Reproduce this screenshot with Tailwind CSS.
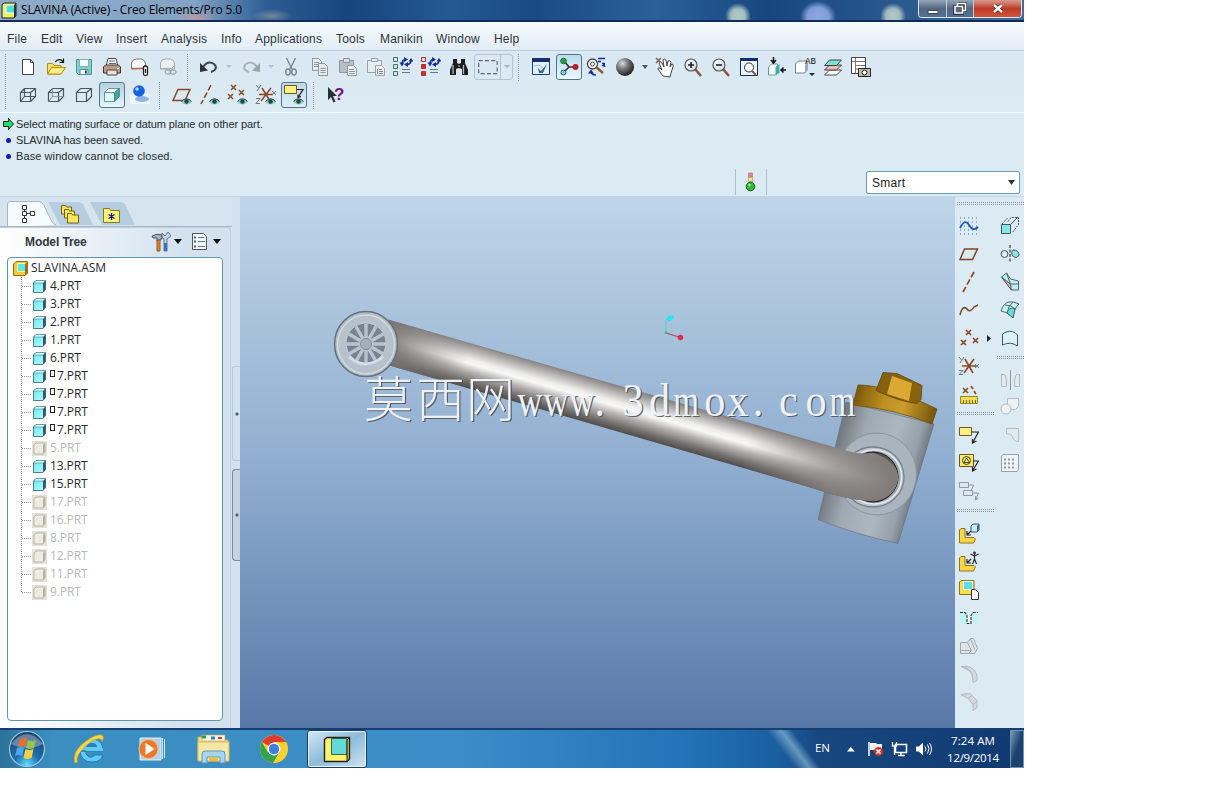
<!DOCTYPE html>
<html lang="en">
<head>
<meta charset="utf-8">
<title>SLAVINA (Active) - Creo Elements/Pro 5.0</title>
<script src="https://cdn.jsdelivr.net/npm/@tailwindcss/browser@4"></script>
</head>
<body class="bg-white overflow-hidden font-['Liberation_Sans',sans-serif]">
<svg width="0" height="0" class="absolute">
  <defs>
    <linearGradient id="cy" x1="0" y1="0" x2="1" y2="1"><stop offset="0" stop-color="#5feaf2"/><stop offset="1" stop-color="#c4fbff"/></linearGradient>
    <linearGradient id="lens" x1="0" y1="0" x2="1" y2="1"><stop offset="0" stop-color="#fff"/><stop offset="1" stop-color="#c5d6e4"/></linearGradient>
    <radialGradient id="ball" cx=".35" cy=".3" r=".8"><stop offset="0" stop-color="#ddd"/><stop offset=".4" stop-color="#777"/><stop offset="1" stop-color="#111"/></radialGradient>
    <symbol id="part" viewBox="0 0 15 15"><path d="M1.500 4 4 1.500h9.500v9L11 13.500H1.500z" fill="url(#cy)" stroke="#4a8288"/><path d="M13.500 1.500v9L11 13.500V4z" fill="#2d5a66"/><path d="M1.500 4 4 1.500h9.500L11 4z" fill="#d9fdff" stroke="#4a8288" stroke-width=".6"/></symbol>
    <symbol id="off" viewBox="0 0 15 15"><path d="M0 0h15v15H0z" fill="#e4e2d6"/><path d="M2 4 4 2h9v8.500L11 13H2z" fill="#eeece0" stroke="#b9b7aa"/><path d="M13 2v8.500L11 13V4z" fill="#b3b1a5"/></symbol>
    <symbol id="eye" viewBox="0 0 11 8"><ellipse cx="5.500" cy="4.500" rx="5" ry="3" fill="#9cc8bd"/><path d="M.5 4.500Q5.500-1 10.500 4.500" fill="none" stroke="#345"/><circle cx="5.500" cy="4.500" r="2.200" fill="#155048"/></symbol>
  </defs>
</svg>
<div class="w-[1024px] h-[768px] flex flex-col overflow-hidden bg-[#dceaf3]">

  <header class="h-[22px] shrink-0 flex justify-between border-b-2 border-[#0f2d58] bg-[radial-gradient(ellipse_20px_8px_at_196px_18px,#c9969dcc_0,transparent),radial-gradient(ellipse_20px_7px_at_272px_16px,#8f98a0bb_0,transparent),radial-gradient(ellipse_13px_13px_at_738px_16px,#b4cbc3_0,#9fbcc0_55%,transparent),radial-gradient(ellipse_18px_16px_at_818px_17px,#8ba7df_0,#7f9ed8_60%,transparent),radial-gradient(ellipse_13px_13px_at_893px_16px,#b4cbc3_0,#9fbcc0_55%,transparent),linear-gradient(90deg,#8fadc9,#84a3c5_19%,#2d5d94_26%,#17447c_34%,#245a94_44%,#194a84_52%,#2a619a_64%,#17467f_75%,#3d6b9c)]">
    <div class="flex items-center pl-px">
      <svg width="17" height="17" viewBox="0 0 17 17"><path d="M1 2.500 3 1h12v13l-2 2H1z" fill="#eef060" stroke="#222"/><path d="M5 3h9v8H5z" fill="#4fe0d8" stroke="#fff"/><path d="M15 1v13l-2 2V3z" fill="#333"/></svg>
      <h1 class="ml-[3px] text-[12px] leading-[20px] whitespace-nowrap text-black tracking-[-0.13px] font-['Open_Sans',sans-serif]">SLAVINA (Active) - Creo Elements/Pro 5.0</h1>
    </div>
    <div class="mr-[2px] h-[18px] w-[104px] flex rounded-b-[4px] overflow-hidden border border-t-0 border-[#dce6ee]">
      <div class="w-[28px] border-r border-[#c2cfdb] bg-linear-to-b from-[#93a5b8] via-[#52687f] to-[#4e7295] grid place-items-center"><svg width="14" height="14"><path d="M2 8.500h10v3H2z" fill="#fff" stroke="#445"/></svg></div>
      <div class="w-[27px] border-r border-[#c2cfdb] bg-linear-to-b from-[#93a5b8] via-[#52687f] to-[#4e7295] grid place-items-center"><svg width="14" height="14" fill="none"><path d="M4.500 1.500h8v7h-2M1.500 4.500h8v7h-8z" stroke="#334" stroke-width="3"/><path d="M4.500 4.500v-3h8v7h-3M2 4.500h7.500v6.500H2z" stroke="#fff" stroke-width="1.600"/></svg></div>
      <div class="grow bg-linear-to-b from-[#d99a8c] via-[#bd3a28] to-[#d2553c] grid place-items-center"><svg width="14" height="14"><path d="m3 3 8 7m0-7-8 7" stroke="#5a2020" stroke-width="4"/><path d="m3 3 8 7m0-7-8 7" stroke="#fff" stroke-width="2.500"/></svg></div>
    </div>
  </header>

  <nav class="h-[29px] shrink-0 pl-[7px] flex items-center bg-linear-to-b from-[#f5fafd] to-[#e3edf5] border-b border-[#b5cde0] text-[12px] leading-none tracking-[0.2px] text-[#2d3238] pt-[6px]">
    <span class="w-[34px]">File</span><span class="w-[35px]">Edit</span><span class="w-[40px]">View</span><span class="w-[45px]">Insert</span><span class="w-[60px]">Analysis</span><span class="w-[34px]">Info</span><span class="w-[81px]">Applications</span><span class="w-[44px]">Tools</span><span class="w-[56px]">Manikin</span><span class="w-[58px]">Window</span><span>Help</span>
  </nav>

  <section class="h-[62px] shrink-0 pt-[2px] border-b border-[#f4f9fc] bg-linear-to-b from-[#d9e8f2] to-[#dceaf2] relative">
    <div class="flex h-7 items-center">
      <div class="w-[3px] h-[27px] ml-1 mr-[7px] bg-[conic-gradient(#7f93ab_25%,transparent_0)] bg-[length:2px_2px]"></div>
      <div class="w-7 grid place-items-center"><svg width="20" height="20"><path d="M4.500 2.500h8l3 3v12h-11z" fill="#fff" stroke="#444"/><path d="M12.500 2.500v3h3" fill="none" stroke="#444"/></svg></div>
      <div class="w-7 grid place-items-center"><svg width="20" height="20"><path d="M1.500 17V6.500h5l1.500 2h7V17z" fill="#f6df6c" stroke="#b48c10"/><path d="m1.500 17 4-6.500h14L15 17z" fill="#ffed85" stroke="#b48c10"/><path d="M9 5q4-4.500 8-.5m.5-3v4h-4" fill="none" stroke="#111" stroke-width="1.200"/></svg></div>
      <div class="w-7 grid place-items-center"><svg width="20" height="20"><path d="M2.500 2.500h15v15h-13l-2-2z" fill="#7dd3ca" stroke="#4f9490"/><path d="M5.500 2.500h9v7h-9z" fill="#eefcfa" stroke="#8ab"/><path d="M6 12.500h8v5H6z" fill="#f4fbfb" stroke="#68a"/><path d="M11 13.500h2v3h-2z" fill="#355"/></svg></div>
      <div class="w-7 grid place-items-center"><svg width="20" height="20"><path d="M6 1.500h8l2 8H4z" fill="#fff" stroke="#444"/><path d="M7 4h6M7 6.500h7" stroke="#667"/><path d="m1.500 10 2-2h13l2 2v6h-17z" fill="#bd9b88" stroke="#403530"/><path d="M5 13h10v5H5z" fill="#e9e2d6" stroke="#544"/><path d="M15 11.500h2" stroke="#fff"/></svg></div>
      <div class="w-7 grid place-items-center"><svg width="20" height="20"><path d="M1.500 12V6q1-4 5-4h5q4 1 4 5v4z" fill="#fbfbfb" stroke="#777"/><path d="M1.500 11.500h11l3-3" fill="none" stroke="#b06d50" stroke-width="1.500"/><path d="M13.500 17v-6q0-2 2-2t2 2v6q0 1.500-2 1.500t-2-1.500zm2-5v4" fill="#fff" stroke="#222" stroke-width="1.300"/></svg></div>
      <div class="w-7 grid place-items-center"><svg width="20" height="20"><path d="M2.500 12V6q1-4 5-4h5q4 1 4 5v5z" fill="#e9eff3" stroke="#aaa"/><path d="M2.500 11.500h11l3-3" fill="none" stroke="#aaa"/><rect x="7" y="13" width="6" height="4" rx="2" fill="none" stroke="#899"/><rect x="12" y="13" width="6" height="4" rx="2" fill="none" stroke="#899"/></svg></div>
      <div class="w-[3px] h-[27px] ml-1 mr-[6px] bg-[conic-gradient(#7f93ab_25%,transparent_0)] bg-[length:2px_2px]"></div>
      <div class="w-7 grid place-items-center"><svg width="22" height="20"><path d="M5 10q5-7 11-3 5 5-3 8" fill="none" stroke="#3d444c" stroke-width="2"/><path d="M2 6v9l8-1.500z" fill="#2c323a"/></svg></div>
      <div class="w-3 grid place-items-center"><svg width="6" height="4"><path d="M0 0h6L3 3z" fill="#b3bfca"/></svg></div>
      <div class="w-7 ml-[2px] grid place-items-center"><svg width="22" height="20"><path d="M17 10q-5-7-11-3-5 5 3 8" fill="none" stroke="#a7b0b8" stroke-width="2"/><path d="M20 6v9l-8-1.500z" fill="#9aa4ad"/></svg></div>
      <div class="w-3 mr-px grid place-items-center"><svg width="6" height="4"><path d="M0 0h6L3 3z" fill="#b3bfca"/></svg></div>
      <div class="w-7 -ml-px mr-px grid place-items-center"><svg width="20" height="20" fill="none" stroke="#7c868f" stroke-width="1.400"><path d="m5.500 1 5.500 11M14.500 1 9 12"/><ellipse cx="7" cy="15" rx="2.300" ry="3"/><ellipse cx="13" cy="15" rx="2.300" ry="3"/></svg></div>
      <div class="w-7 grid place-items-center"><svg width="20" height="20" fill="#e6ecf0" stroke="#8d969d"><path d="M2.500 1.500h6l3 3v9h-9z"/><path d="M4 5.500h5M4 7.500h5M4 9.500h5"/><path d="M8.500 6.500h6l3 3v9h-9z"/><path d="M10.500 11.500h5M10.500 13.500h5M10.500 15.500h5"/></svg></div>
      <div class="w-7 grid place-items-center"><svg width="20" height="20" fill="#b9c0c5" stroke="#8d969d"><path d="M1.500 3.500h14v12h-14z"/><path d="M5.500 1.500h6v4h-6z" fill="#dde"/><path d="M9.500 8.500h6l3 3v7h-9z" fill="#eef2f5"/><path d="M11 12.500h5M11 14.500h6M11 16.500h6"/></svg></div>
      <div class="w-7 grid place-items-center"><svg width="20" height="20" fill="#e9eef2" stroke="#98a1a8"><path d="M1.500 3.500h14v12h-14z"/><path d="M5.500 1.500h6v3h-6z"/><path d="M9.500 8.500h6l3 3v7h-9z" fill="#eef2f5"/><path d="M11.500 12v5M13 12.500h3M13 14.500h4M13 16.500h4" stroke="#788"/></svg></div>
      <div class="w-7 -ml-px mr-px grid place-items-center"><svg width="20" height="20" fill="#c8eee0" stroke="#487068"><path d="M.5.500h4v4h-4zM.5 7.500h4v4h-4zM.5 14.500h4v4h-4z"/><path d="M9 7q0-4 3.500-4.500M18 3q0 4-3.500 4.500" fill="none" stroke="#162a9a" stroke-width="1.600"/><path d="m11 0 4 2.500-4 2.500zM15 5 11 7.500l4 2.500zM6.500 5.500h5l-2.500 4zM20.500 4.500h-5L18 1z" fill="#162a9a" stroke="none"/><path d="M9 12.500h8M9 15.500h8" stroke="#678"/></svg></div>
      <div class="w-7 -ml-px mr-px grid place-items-center"><svg width="20" height="20" fill="#f5dada" stroke="#a33"><path d="M.5.500h4v4h-4z"/><path d="M.5 7.500h4v4h-4zM.5 14.500h4v4h-4z" fill="#d92e2e"/><path d="M9 7q0-4 3.500-4.500M18 3q0 4-3.500 4.500" fill="none" stroke="#162a9a" stroke-width="1.600"/><path d="m11 0 4 2.500-4 2.500zM15 5 11 7.500l4 2.500zM6.500 5.500h5l-2.500 4zM20.500 4.500h-5L18 1z" fill="#162a9a" stroke="none"/><path d="M9 12.500h8M9 15.500h8" stroke="#678"/></svg></div>
      <div class="w-7 -ml-px mr-px grid place-items-center"><svg width="20" height="20"><path d="M4 2h4v4l2 1 2-1V2h4v4l3 7v5h-6v-6l-3-1-3 1v6H1v-5l3-7z" fill="#1c1c1c"/><path d="M4 8v9M14.500 8v9" stroke="#bbb" stroke-width="1.300"/><path d="M9.500 8h1v2h-1z" fill="#bbb"/></svg></div>
      <div class="w-[39px] h-[26px] flex border border-[#b3c2ce] rounded-[3px]"><div class="w-[26px] border-r border-[#b3c2ce] grid place-items-center"><svg width="20" height="16"><path d="M.7 1.700h18.500v13H.7z" fill="none" stroke="#5b6670" stroke-width="1.200" stroke-dasharray="4 2.300"/></svg></div><div class="grow grid place-items-center"><svg width="6" height="4"><path d="M0 0h6L3 3z" fill="#a5b2be"/></svg></div></div>
      <div class="w-[3px] h-[27px] ml-1 mr-[7px] bg-[conic-gradient(#7f93ab_25%,transparent_0)] bg-[length:2px_2px]"></div>
      <div class="w-7 grid place-items-center"><svg width="20" height="20"><path d="M1.500 1.500h17v16h-17z" fill="#dff2fb" stroke="#163a8c"/><path d="M1 1h18v4H1z" fill="#14306e"/><path d="m3 9 5-1 4 3" stroke="#9bb" fill="none"/><path d="m16 7-6 7-3-3 1 5h4z" fill="#3a6580"/></svg></div>
      <div class="w-7 grid place-items-center"><div class="w-[26px] h-[26px] rounded-[3px] border border-[#52758c] bg-linear-to-b from-[#b8dcec] to-[#eaf9ff] grid place-items-center"><svg width="20" height="20"><path d="m5 4 5 6-5 5m5-5h7" fill="none" stroke="#333" stroke-width="1.600"/><circle cx="4.500" cy="4" r="2.800" fill="#2ca537" stroke="#174"/><circle cx="4.500" cy="15.500" r="2.500" fill="#6fd5dc" stroke="#356"/><circle cx="16.500" cy="10" r="3" fill="#bd1c2c"/></svg></div></div>
      <div class="w-7 -ml-px mr-px grid place-items-center"><svg width="20" height="20" fill="none"><circle cx="6.500" cy="7" r="5" fill="#f3f6f8" stroke="#444" stroke-width="1.300"/><circle cx="6.500" cy="7" r="2" stroke="#444"/><path d="m10 10 7 6" stroke="#8a5a3c" stroke-width="2.400"/><path d="M12 1.500h7M12 4.500h3m1 2h3M5 14q0 4 5 4" stroke="#162a9a" stroke-width="1.500"/><path d="m2 16.500 3-4 3 4zM19.500 10l-4-1 3-3z" fill="#162a9a"/></svg></div>
      <div class="w-7 grid place-items-center"><svg width="20" height="20"><circle cx="10" cy="10" r="9" fill="url(#ball)"/></svg></div>
      <div class="w-[12px] grid place-items-center"><svg width="6" height="4"><path d="M0 0h6L3 4z" fill="#4a545e"/></svg></div>
      <div class="w-7 grid place-items-center"><svg width="22" height="22"><path d="m2 2 5 5m0-5L2 7" stroke="#885a44" stroke-width="1.400"/><path d="m9 20-5-7q0-2 2-1l2 2-3-7q1-2 3 0l2 4-1-7q1-2 3 0l1 6 1-5q2-1 3 1l-1 5 2-3q2 0 1 3l-2 6-1 4z" fill="#fff" stroke="#333" stroke-width=".9"/></svg></div>
      <div class="w-7 grid place-items-center"><svg width="20" height="20"><path d="m12 12 6 7" stroke="#865545" stroke-width="2.600"/><circle cx="8" cy="8" r="6" fill="url(#lens)" stroke="#555" stroke-width="1.200"/><path d="M5 8h6M8 5v6" stroke="#222" stroke-width="1.600"/></svg></div>
      <div class="w-7 grid place-items-center"><svg width="20" height="20"><path d="m12 12 6 7" stroke="#865545" stroke-width="2.600"/><circle cx="8" cy="8" r="6" fill="url(#lens)" stroke="#555" stroke-width="1.200"/><path d="M5 8h6" stroke="#222" stroke-width="1.600"/></svg></div>
      <div class="w-7 grid place-items-center"><svg width="20" height="20"><path d="M1.500 1.500h17v17h-17z" fill="#eaf4fa" stroke="#1b2c50"/><path d="M1 1h18v3H1z" fill="#14306e"/><circle cx="10" cy="10.500" r="4.500" fill="#fff" stroke="#333"/><path d="m13 14 4 4" stroke="#865545" stroke-width="2"/></svg></div>
      <div class="w-7 grid place-items-center"><svg width="20" height="20"><path d="m1.500 10 3-3h6v9l-2 2h-7z" fill="#fff" stroke="#699"/><path d="M8.500 10v8l4-2V7z" fill="#39afa4"/><path d="M6.500 0v5M4 3l2.500 3L9 3M19 13h-5m2.500-2.500L14 13l2.500 2.500" fill="none" stroke="#111" stroke-width="1.500"/></svg></div>
      <div class="w-7 grid place-items-center"><svg width="22" height="22"><path d="m1.500 8 3-3h8v9l-2 3h-9z" fill="#fff" stroke="#688"/><path d="M11 9v8l3-3V6z" fill="#9ab"/><path d="M15 17h6l-3 3z" fill="#225"/><text x="11" y="8" font-size="9" font-family="Liberation Mono" fill="#111">AB</text></svg></div>
      <div class="w-7 grid place-items-center"><svg width="20" height="20" stroke="#333" stroke-width=".9"><path d="m1.500 18 5-5h12l-5 5z" fill="#fff"/><path d="m1.500 13 5-5h12l-5 5z" fill="#e9bdb8"/><path d="m1.500 8.500 5-5.500h12l-5 5.500z" fill="#7de3d8"/></svg></div>
      <div class="w-7 grid place-items-center"><svg width="22" height="22" fill="none" stroke="#444"><path d="M1.500 1.500h14v16h-14z" fill="#fff"/><path d="M5.500 2v15M2 5.500h13M6 9.500h9M6 13h9" stroke="#777"/><path d="M8.500 12.500h12v8h-12z" fill="#c3beb2" stroke="#222"/><circle cx="14.500" cy="16.500" r="2.500" fill="#fff" stroke="#222"/></svg></div>
    </div>
    <div class="flex h-7 items-center">
      <div class="w-[3px] h-[27px] ml-1 mr-[7px] bg-[conic-gradient(#7f93ab_25%,transparent_0)] bg-[length:2px_2px]"></div>
      <div class="w-7 grid place-items-center"><svg width="20" height="20" fill="none" stroke="#4d5560" stroke-width="1.200"><path d="M2.500 7.500h10v9h-10zM6.500 3.500h11v8h-11zM2.500 7.500l4-4m6 4 5-4m-5 13 5-5m-15 5 4-5"/></svg></div>
      <div class="w-7 grid place-items-center"><svg width="20" height="20" fill="none" stroke="#4d5560" stroke-width="1.200"><path d="M2.500 7.500h10v9h-10zl4-4h11v8l-5 5m0-9 5-4"/><path d="M6.500 3.500v8h11m-15 5 4-5" stroke="#8f99a3"/></svg></div>
      <div class="w-7 grid place-items-center"><svg width="20" height="20" fill="none" stroke="#4d5560" stroke-width="1.200"><path d="M2.500 7.500h10v9h-10zl4-4h11v8l-5 5m0-9 5-4"/></svg></div>
      <div class="w-7 grid place-items-center"><div class="w-[26px] h-[26px] rounded-[3px] border border-[#52758c] bg-linear-to-b from-[#b5cfe0] to-[#e6f6fe] grid place-items-center"><svg width="20" height="20" stroke="#4a8288" stroke-width=".8"><path d="M2.500 7.500h10v9h-10z" fill="#dffdff"/><path d="m2.500 7.500 4-4h11l-5 4z" fill="#fff"/><path d="m12.500 7.500 5-4v8l-5 5z" fill="#38a9a7"/></svg></div></div>
      <div class="w-7 grid place-items-center"><svg width="20" height="22"><path d="M0 10h20v10H0z" fill="#eef7fd"/><ellipse cx="12" cy="15" rx="7" ry="3" fill="#8cb6e4"/><circle cx="9" cy="7" r="5.800" fill="#1664dc"/><circle cx="7" cy="5" r="1.800" fill="#b3d4ff"/></svg></div>
      <div class="w-[3px] h-[27px] ml-1 mr-[7px] bg-[conic-gradient(#7f93ab_25%,transparent_0)] bg-[length:2px_2px]"></div>
      <div class="w-7 grid place-items-center"><svg width="22" height="22" fill="none"><path d="M7 5.500h12l-5 11H2z" stroke="#8a4a22" stroke-width="1.500"/><use href="#eye" x="10" y="13" width="11" height="8"/></svg></div>
      <div class="w-7 grid place-items-center"><svg width="22" height="22"><path d="M12 1 2 20" stroke="#8a4a22" stroke-width="1.600" stroke-dasharray="6 2.500"/><use href="#eye" x="10" y="13" width="11" height="8"/></svg></div>
      <div class="w-7 grid place-items-center"><svg width="22" height="22"><path d="m4 1 5 5m0-5L4 6m8 0 5 5m0-5-5 5M1 10l5 5m0-5-5 5" stroke="#8a4a22" stroke-width="1.500"/><use href="#eye" x="10" y="13" width="11" height="8"/></svg></div>
      <div class="w-7 grid place-items-center"><svg width="22" height="22"><path d="m7 4 8 13m1-13L6 17M4 10.500h14" stroke="#8a4a22" stroke-width="1.500"/><path d="m1 1 2.500 3M6 1 2 7M1 14.500h4l-4 5h4M17 7l4 4m0-4-4 4" fill="none" stroke="#678"/><use href="#eye" x="10" y="13" width="11" height="8"/></svg></div>
      <div class="w-7 grid place-items-center"><div class="w-[26px] h-[26px] rounded-[3px] border border-[#52758c] bg-linear-to-b from-[#c3d9e6] to-[#dceef8] grid place-items-center"><svg width="22" height="22" fill="none"><path d="M1.500 1.500h12v8h-12z" fill="#ffef86" stroke="#665a20"/><path d="M14 5.500h6l-5 8m0-3v3l3-1" stroke="#222" stroke-width="1.200"/><use href="#eye" x="10" y="13" width="11" height="8"/></svg></div></div>
      <div class="w-[3px] h-[27px] ml-1 mr-[7px] bg-[conic-gradient(#7f93ab_25%,transparent_0)] bg-[length:2px_2px]"></div>
      <div class="w-7 grid place-items-center"><svg width="20" height="20"><path d="M2 2v13l3-3 2.500 5.500 2-1L7 11h4z" fill="#2a2f36"/><text x="8" y="15" font-size="17" font-weight="bold" font-family="Liberation Sans" fill="#7c1180">?</text></svg></div>
    </div>
  </section>

  <section class="h-[84px] shrink-0 flex flex-col justify-between border-b border-[#c3d5e3] bg-[#dceaf3]">
    <div class="pt-[3px] pl-[3px] text-[11px] leading-4 text-[#262b31]">
      <p class="flex items-center"><svg class="mr-[2px]" width="11" height="12"><path d="M.5 3.500h5v-3L10.500 6l-5 5.500v-3h-5z" fill="#22dd66" stroke="#222"/></svg><span class="tracking-[-0.08px]">Select mating surface or datum plane on other part.</span></p>
      <p class="flex items-center"><i class="ml-[3px] mr-[5px] w-[5px] h-[5px] rounded-full bg-[#1418b4]"></i><span class="tracking-[-0.08px]">SLAVINA has been saved.</span></p>
      <p class="flex items-center"><i class="ml-[3px] mr-[5px] w-[5px] h-[5px] rounded-full bg-[#1418b4]"></i><span class="tracking-[0.09px]">Base window cannot be closed.</span></p>
    </div>
    <div class="h-[27px] flex justify-end items-start pr-[4px]">
      <div class="w-[32px] h-[26px] mr-[99px] border-l border-r border-[#b0bfcb] grid place-items-center"><svg width="12" height="20"><path d="M3.500 1h4v4h-4z" fill="#d98a94" stroke="#b77" stroke-width=".7"/><path d="M3.500 5.500h4v4h-4z" fill="#f3e7a0" stroke="#b99a50" stroke-width=".7"/><circle cx="5.500" cy="14.500" r="4.300" fill="#35b83c" stroke="#145a1c"/><circle cx="4.500" cy="13" r="1.200" fill="#aeefae"/></svg></div>
      <div class="w-[154px] h-[23px] mt-[2px] rounded-[2px] bg-white border border-[#6f9db0] flex items-center justify-between pl-[5px] pr-[4px] text-[12px] text-[#222]"><span class="pt-px tracking-[0.3px]">Smart</span><svg width="7" height="5"><path d="M0 0h7L3.500 5z" fill="#333"/></svg></div>
    </div>
  </section>

  <main class="h-[531px] shrink-0 flex">
    <aside class="w-[232px] shrink-0 flex flex-col bg-[#d6e4ef]">
      <div class="h-[30px] pl-[6px] pt-[4px] border-b border-[#a9b8c5] flex">
        <svg width="130" height="25" viewBox="6 0 130 25">
          <path d="M90 1h30q4 0 6 4l9 19H102z" fill="#b5cddf"/><path d="M48 1h30q4 0 6 4l9 19H60z" fill="#b5cddf"/>
          <path d="M7.500 26V3q0-2.500 2.500-2.500h29q3 0 5 4L52 21q1 2 4 3" fill="#f6fafd" stroke="#a3b6c6"/>
          <path d="M22.500 4.500h4v4h-4zM22.500 10.500h4v4h-4zM22.500 17.500h4v4h-4zM30.500 10.500h4v4h-4zM26.500 12.500h4M24.500 8v2m0 4v3" fill="#fff" stroke="#333"/>
          <g fill="#fae75e" stroke="#6d6218"><path d="M61.500 4.500h4l1 1.500h5v7h-10z"/><path d="M64.500 8.500h4l1 1.500h5v7h-10z"/><path d="M67.500 12.500h4l1 1.500h6v8h-11z"/></g>
          <path d="M103.500 7.500h6l1 2h9v12h-16z" fill="#fff07a" stroke="#857824"/><path d="M111.500 12v7m-3-5.500 6 4m0-4-6 4" stroke="#1a1a88" stroke-width="1.300"/>
        </svg>
      </div>
      <div class="w-[231px] grow flex flex-col border-r border-t border-[#c1cdd8] rounded-tr-[4px] bg-linear-to-r from-white to-[#d3e2ee] to-80%">
        <div class="h-[29px] flex items-center pl-[25px] pr-[8px] pb-[2px]">
          <h2 class="text-[12px] font-bold text-[#32373c] w-[126px] tracking-[-0.1px]">Model Tree</h2>
          <svg width="22" height="22"><path d="M1 5q5-3 10-1v4H9v2H6V7H2z" fill="#a3b3bf" stroke="#456"/><path d="M6 9h3v11H6z" fill="#e88722" stroke="#853"/><path d="M11 6V2l3 3 3-4 3 4-4 3v12h-3V8z" fill="#bfd6ec" stroke="#456" stroke-width=".8"/><path d="M13 12h3v8h-3z" fill="#3b6fb9"/></svg>
          <svg class="ml-[1px]" width="8" height="5"><path d="M0 0h8L4 5z" fill="#111"/></svg>
          <svg class="ml-[8px]" width="20" height="20"><path d="M2.500 1.500h11l3 3v13h-14z" fill="#f2f7fa" stroke="#555"/><path d="M8 5.500h6M8 9.500h7M8 14.500h7" stroke="#579"/><path d="M4 5.500h2M4 9.500h2M4 14.500h2" stroke="#467" stroke-width="2"/></svg>
          <svg class="ml-[3px]" width="8" height="5"><path d="M0 0h8L4 5z" fill="#111"/></svg>
        </div>
        <div class="ml-[7px] w-[216px] h-[464px] bg-white border border-[#5f95ab] rounded-[4px] font-['Open_Sans',sans-serif] text-[12px] leading-[18px] text-[#26292d]">
          <div class="flex items-center h-[18px] pl-[5px] mt-px"><svg width="15" height="15" class="mr-[3px]"><path d="M.5 3 3 .5h11.500V12L12 14.500H.5z" fill="#f8c73c" stroke="#8f6a1c"/><path d="M4.500 2.500h8v8h-8z" fill="#5de8e4" stroke="#fff6a0"/><path d="M14.500.500V12L12 14.500V3z" fill="#9d6c20"/></svg><span class="tracking-[-0.07px]">SLAVINA.ASM</span></div>
          <ul id="tree" class="relative ml-[13px]"></ul>
        </div>
      </div>
    </aside>
    <div class="w-2 shrink-0 bg-[#d3e2ee] flex flex-col pt-[169px]">
      <div class="h-[95px] border border-r-0 border-[#b9c8d5] rounded-l-[3px] grid place-items-center"><i class="w-[4px] h-[4px] rounded-full bg-[#34485c] border border-[#8da0b2]"></i></div>
      <div class="h-[92px] mt-[8px] border border-r-0 border-[#7d8b99] rounded-l-[4px] bg-[#c7d4e0] grid place-items-center"><i class="w-[4px] h-[4px] rounded-full bg-[#34485c] border border-[#8da0b2]"></i></div>
    </div>

    <svg class="w-[715px] h-[531px] shrink-0" viewBox="240 197 715 531">
      <defs>
        <linearGradient id="bg" x1="0" y1="0" x2="0" y2="1"><stop offset="0" stop-color="#bfd5e7"/><stop offset=".5" stop-color="#90aed0"/><stop offset="1" stop-color="#5878a8"/></linearGradient>
        <linearGradient id="pipe" gradientUnits="userSpaceOnUse" x1="600" y1="380" x2="587.500" y2="423"><stop offset="0" stop-color="#858180"/><stop offset=".12" stop-color="#a8a6a4"/><stop offset=".36" stop-color="#eeeeed"/><stop offset=".46" stop-color="#f8f8f8"/><stop offset=".64" stop-color="#b4b2b0"/><stop offset=".85" stop-color="#716e6c"/><stop offset="1" stop-color="#4e4c4a"/></linearGradient>
        <linearGradient id="fade" gradientUnits="userSpaceOnUse" x1="385" y1="342" x2="900" y2="490"><stop offset="0" stop-color="#77726f" stop-opacity=".95"/><stop offset=".16" stop-color="#85817e" stop-opacity="0"/><stop offset=".7" stop-color="#85817e" stop-opacity="0"/><stop offset=".88" stop-color="#8b8785" stop-opacity=".8"/><stop offset="1" stop-color="#7c7672"/></linearGradient>
        <linearGradient id="body" gradientUnits="userSpaceOnUse" x1="832" y1="465" x2="918" y2="489"><stop offset="0" stop-color="#747b82"/><stop offset=".25" stop-color="#9fa9b2"/><stop offset=".6" stop-color="#acb7c1"/><stop offset=".85" stop-color="#97a1aa"/><stop offset="1" stop-color="#6c747c"/></linearGradient>
        <linearGradient id="gold" gradientUnits="userSpaceOnUse" x1="855" y1="394" x2="935" y2="416"><stop offset="0" stop-color="#7a570c"/><stop offset=".35" stop-color="#bc8e20"/><stop offset=".6" stop-color="#cb9d2c"/><stop offset="1" stop-color="#74530e"/></linearGradient>
      </defs>
      <path d="M240 197h715v531H240z" fill="url(#bg)"/>
      <path d="m846 402 88 22-36 119.500q-42-9-80-24z" fill="url(#body)" stroke="#6c757d" stroke-width=".7"/>
      <path d="m858 385q30 0 79 24l-5 15q-38-15-79-19z" fill="url(#gold)" stroke="#6d4e0d" stroke-width=".8"/>
      <path d="m883 372.500 14 1 25 12-1 14-4 4q-18-2-41-13z" fill="#86620f" stroke="#60440b" stroke-width=".8"/>
      <path d="m892 376 20 7-3 18-22-7z" fill="#daa934"/>
      <ellipse cx="877" cy="474" rx="39.500" ry="41" fill="#a9b4be" stroke="#8b959f"/>
      <ellipse cx="873" cy="477" rx="31" ry="30" fill="#bcc7d1" stroke="#77828c" stroke-width="1.300"/>
      <ellipse cx="874" cy="477" rx="27.500" ry="27" fill="#9aa5af" stroke="#e3e9ee" stroke-width="1.500"/>
      <ellipse cx="873" cy="477" rx="25" ry="25" fill="#535150" stroke="#222"/>
      <path d="M388 319.500 844 450Q858 455 873 453 897 461 898 477 896 497 875 501 850 501 812 488L388 365z" fill="url(#pipe)"/>
      <path d="M388 319.500 844 450Q858 455 873 453 897 461 898 477 896 497 875 501 850 501 812 488L388 365z" fill="url(#fade)"/>
      <ellipse cx="366" cy="344" rx="31.500" ry="32.500" fill="#b0bbc5" stroke="#68717a" stroke-width="1.500"/>
      <ellipse cx="366" cy="344.500" rx="28.500" ry="29.500" fill="#b7c1cb" stroke="#d3dbe1" stroke-width="1.400"/>
      <circle cx="366" cy="343" r="20" fill="#77838f" stroke="#c3cdd6"/>
      <g stroke="#b9c4ce" stroke-width="3.400"><path d="M366 324v40M346 344h40M356 326.700l20 34.600M376 326.700l-20 34.600M348.700 334l34.600 20M348.700 354l34.600-20"/></g>
      <circle cx="366" cy="344" r="5.500" fill="#a3afb9" stroke="#7f8b95"/>
      <path d="M349 357q16 14 34 0" fill="none" stroke="#d5dee5" stroke-width="2.500"/>
      <path d="M666 331v-10" stroke="#52d3c9"/><path d="m666 320 2-4 5-1 1 3-4 3z" fill="#22e5f5"/><path d="m666 333 13 4" stroke="#b53a5c"/><circle cx="680.500" cy="337.500" r="2.700" fill="#e02c50"/><circle cx="666" cy="332.500" r="1.500" fill="#38c27a"/>
      <g fill="#4b5157" fill-opacity=".85" transform="translate(1.300 1.300)">
        <text x="364 416 466" y="417" font-size="49" font-weight="300" font-family="Noto Sans CJK SC">莫西网</text>
        <text font-size="46" y="416" font-family="Liberation Serif" text-anchor="middle" transform="scale(.75 1)" x="706.700 741.300 776">www</text>
        <text font-size="46" y="416" font-family="Liberation Serif" text-anchor="middle" transform="scale(.92 1)" x="652 688 717">.3d</text>
        <text font-size="46" y="416" font-family="Liberation Serif" text-anchor="middle" transform="scale(.72 1)" x="953">m</text>
        <text font-size="46" y="416" font-family="Liberation Serif" text-anchor="middle" transform="scale(.92 1)" x="777 802 824 857 887">ox.co</text>
        <text font-size="46" y="416" font-family="Liberation Serif" text-anchor="middle" transform="scale(.72 1)" x="1170">m</text>
      </g>
      <g fill="#eef2f5" aria-hidden="true">
        <text x="364 416 466" y="417" font-size="49" font-weight="300" font-family="Noto Sans CJK SC">莫西网</text>
        <text font-size="46" y="416" font-family="Liberation Serif" text-anchor="middle" transform="scale(.75 1)" x="706.700 741.300 776">www</text>
        <text font-size="46" y="416" font-family="Liberation Serif" text-anchor="middle" transform="scale(.92 1)" x="652 688 717">.3d</text>
        <text font-size="46" y="416" font-family="Liberation Serif" text-anchor="middle" transform="scale(.72 1)" x="953">m</text>
        <text font-size="46" y="416" font-family="Liberation Serif" text-anchor="middle" transform="scale(.92 1)" x="777 802 824 857 887">ox.co</text>
        <text font-size="46" y="416" font-family="Liberation Serif" text-anchor="middle" transform="scale(.72 1)" x="1170">m</text>
      </g>
    </svg>

    <aside class="w-[69px] shrink-0 flex bg-[#dceaf3] pt-[5px]">
      <div class="w-[41px] flex flex-col">
        <div class="w-[40px] h-[3px] ml-px mb-[7px] bg-[conic-gradient(#7f93ab_25%,transparent_0)] bg-[length:2px_2px]"></div>
        <div class="w-7 h-7 grid place-items-center"><svg width="20" height="20"><path d="M1 2h18M1 6h18M1 10h18M1 14h18M1 18h18" stroke="#3f66b0" stroke-dasharray="1 3"/><path d="M1 12q5-10 9-3t9 2" fill="none" stroke="#1a5bb8" stroke-width="1.800"/></svg></div>
        <div class="w-7 h-7 grid place-items-center"><svg width="20" height="20"><path d="M5.500 5h13l-5 10.500H1z" fill="none" stroke="#7d4526" stroke-width="1.500"/></svg></div>
        <div class="w-7 h-7 grid place-items-center"><svg width="20" height="22"><path d="M15 1 4 21" stroke="#8a4a22" stroke-width="1.700" stroke-dasharray="6 2.500"/></svg></div>
        <div class="w-7 h-7 grid place-items-center"><svg width="20" height="20"><path d="M1 15q2-9 6-7 4 6 8-1l4-2" fill="none" stroke="#7d4526" stroke-width="1.500"/></svg></div>
        <div class="h-7 flex items-center"><svg class="ml-1" width="20" height="20"><path d="m7 2 5 5m0-5L7 7m7 3 5 5m0-5-5 5M2 12l5 5m0-5-5 5" stroke="#8a4a22" stroke-width="1.700"/></svg><svg class="ml-[8px]" width="5" height="7"><path d="M0 0v7l4-3.500z" fill="#223"/></svg></div>
        <div class="w-7 h-7 grid place-items-center"><svg width="22" height="22"><path d="m7 4 8 14m1-14L6 18M4 11h14" stroke="#8a4a22" stroke-width="1.600"/><path d="m1 2 2.500 3M6 2 2 8M1 15.500h4l-4 4h4M17 9l4 4m0-4-4 4" fill="none" stroke="#678"/></svg></div>
        <div class="w-7 h-7 grid place-items-center"><svg width="20" height="22"><path d="m4 5 5 5m0-5-5 5m8-7 2 3m1 2 2 3" stroke="#8a4a22" stroke-width="1.700"/><path d="M1.500 13.500h17v7h-17z" fill="#f3de5c" stroke="#9a861e"/><path d="M4.500 17v3m3-3v3m3-3v3m3-3v3m3-3v3" stroke="#7a6a18"/></svg></div>
        <div class="w-[39px] h-[3px] ml-px mt-[4px] mb-[6px] bg-[conic-gradient(#7f93ab_25%,transparent_0)] bg-[length:2px_2px]"></div>
        <div class="w-7 h-7 grid place-items-center"><svg width="20" height="20"><path d="M.5 2.500h12v8H.5z" fill="#ffef86" stroke="#665a20"/><path d="M12.500 7h7l-6 11m0-4v4l4-2" fill="none" stroke="#222" stroke-width="1.200"/></svg></div>
        <div class="w-7 h-7 grid place-items-center"><svg width="20" height="20"><path d="M.5 1.500h14v12H.5z" fill="#ffe96a" stroke="#665a20"/><circle cx="7.500" cy="7.500" r="4" fill="none" stroke="#443"/><path d="M5 9.500 7.500 5l3 4.500z" fill="none" stroke="#443"/><path d="M14 8h5.500l-6 10m0-4v4l4-2" fill="none" stroke="#222" stroke-width="1.200"/></svg></div>
        <div class="w-7 h-7 grid place-items-center"><svg width="20" height="20" fill="none" stroke="#8d99a4"><path d="M.5 1.500h9v5h-9zM4.500 9.500h9v5h-9zM9.500 4h5l-2 5M13.500 12h6l-3 7m0-4v4l3-2"/></svg></div>
        <div class="w-[39px] h-[3px] ml-px mt-[4px] mb-[8px] bg-[conic-gradient(#7f93ab_25%,transparent_0)] bg-[length:2px_2px]"></div>
        <div class="w-7 h-7 grid place-items-center"><svg width="22" height="22"><path d="M1.500 7 3 5.500h4v9h9l1.500 1.500-2 4h-14z" fill="#f7d548" stroke="#8d7416"/><path d="m13 8-4 4m0-4v4h4" fill="none" stroke="#222" stroke-width="1.200"/><path d="m13 3 2-2h6v6l-2 2h-6z" fill="#c5ecf5" stroke="#356"/><path d="m21 1v6l-2 2V3z" fill="#468"/></svg></div>
        <div class="w-7 h-7 grid place-items-center"><svg width="22" height="22"><path d="M1.500 7 3 5.500h4v9h9l1.500 1.500-2 4h-14z" fill="#f7d548" stroke="#8d7416"/><path d="M13 8 9 12m0-4v4h4M16.500 3v5m0-3-4-2m4 2 4-2m-4 5-2 5m2-5 2 5" fill="none" stroke="#222" stroke-width="1.100"/><circle cx="16.500" cy="2" r="1.400" fill="#333"/></svg></div>
        <div class="w-7 h-7 grid place-items-center"><svg width="22" height="22"><path d="M1.500 3 3 1.500h13v11l-3 3H1.500z" fill="#f7e050" stroke="#8d7416"/><path d="M5.500 2.500h9v8h-9z" fill="#5fdce4" stroke="#e9ffff"/><path d="M13.500 10.500h4l3 3v7h-7z" fill="#fff" stroke="#333"/></svg></div>
        <div class="w-7 h-7 grid place-items-center"><svg width="20" height="20"><path d="M1 4h18v11H1z" fill="#bdf4f6"/><path d="M1 4.500h5l2 3v8h4v-8l2-3h5" fill="#e3f5fa" stroke="#333" stroke-width="1.100" stroke-dasharray="3 1"/></svg></div>
        <div class="w-7 h-7 grid place-items-center"><svg width="20" height="20" fill="#dfe4e8" stroke="#a0a7ad"><path d="M1.500 6.500h7l3-4h3l4 10-3 5h-14z"/><path d="m8.500 6.500 4 8-3 3m2-15 4 11M2 14.500h10" fill="none"/></svg></div>
        <div class="w-7 h-7 grid place-items-center"><svg width="20" height="20" fill="#d3d9de" stroke="#b3b9be"><path d="M2 2.500q13-2 16 9v5l-4 2q0-9-4-12z"/><path d="M2 2.500q11 1 12 12" fill="none"/></svg></div>
        <div class="w-7 h-7 grid place-items-center"><svg width="20" height="20" fill="#d3d9de" stroke="#b3b9be"><path d="m2 2.500 9-1 7 7v7l-4 3v-6l-5-6z"/><path d="m9 6.500 4-3m1 9 4-3" fill="none"/></svg></div>
      </div>
      <div class="w-7 flex flex-col">
        <div class="h-[3px] mb-[7px] bg-[conic-gradient(#7f93ab_25%,transparent_0)] bg-[length:2px_2px]"></div>
        <div class="w-7 h-7 grid place-items-center"><svg width="20" height="20" fill="none" stroke="#456"><path d="M8 5.500 11 1.500h7.500v7L12 17M2 8l6-6.500" stroke-dasharray="2 1"/><path d="M1.500 8.500h9v9h-9z" fill="#86e9e4"/><path d="m10.500 8.500 7-7"/></svg></div>
        <div class="w-7 h-7 grid place-items-center"><svg width="20" height="20" fill="none" stroke="#456"><path d="M10 1v18" stroke-dasharray="3 1.500" stroke="#111"/><circle cx="4.500" cy="10" r="3.500"/><path d="M13 6q6 0 6 5-3 5-7 0-1-3 1-5z" fill="#8ce5d8"/></svg></div>
        <div class="w-7 h-7 grid place-items-center"><svg width="20" height="20" stroke="#456" stroke-width=".9"><path d="m1.500 5 5-4 4 6 8 2v9h-7z" fill="#bdf0ea"/><path d="m1.500 5 9 7 1 6z" fill="#e8a9a5"/><path d="m6.500 1 4 11h8" fill="none"/></svg></div>
        <div class="w-7 h-7 grid place-items-center"><svg width="20" height="20" stroke="#456" stroke-width=".9"><path d="M1 11q2-7 7-9 5-1 11 2-5 4-6 14-3-5-12-7z" fill="#c5f3f0"/><path d="M5 5q7 0 10 4M13 2q-5 4-6 11" fill="none"/><path d="m13 18-6-5q2-7 8-4z" fill="#66dcd8"/></svg></div>
        <div class="w-7 h-7 grid place-items-center"><svg width="20" height="20"><path d="M2.500 17V6q7-5 13-1l2 2v11q-7-5-15-1z" fill="#daf1f5" stroke="#456"/></svg></div>
        <div class="h-[3px] mt-[4px] mb-[7px] bg-[conic-gradient(#7f93ab_25%,transparent_0)] bg-[length:2px_2px]"></div>
        <div class="w-7 h-7 grid place-items-center"><svg width="20" height="20" fill="#e5eaee" stroke="#b3bbc2"><path d="M10.500 0v20" stroke="#8d979f"/><path d="M1.500 4.500h3q2 2 2 12h-5zM19.500 4.500h-3q-2 2-2 12h5z"/></svg></div>
        <div class="w-7 h-7 -mt-px mb-px grid place-items-center"><svg width="20" height="20" fill="#eef2f5" stroke="#b3bbc2"><path d="M7.500 1.500h11v8l-3 3h-8z"/><circle cx="6" cy="12" r="5"/></svg></div>
        <div class="w-7 h-7 -mt-px grid place-items-center"><svg width="20" height="20" fill="#e5e9ec" stroke="#b3bbc2"><path d="M6.500 3.500h12v13q-5 0-6-5-1-3-6-3z"/></svg></div>
        <div class="w-7 h-7 grid place-items-center"><svg width="20" height="20"><path d="M1.500 3 3 1.500h15.500v15L17 18.500H1.500z" fill="#f1f4f6" stroke="#96a0a8"/><path d="M4 6.500h12M4 10.500h12M4 14.500h12" stroke="#8b96a0" stroke-width="2" stroke-dasharray="2 2"/></svg></div>
      </div>
    </aside>
  </main>

  <footer class="h-[40px] shrink-0 flex items-stretch justify-between border-t-2 border-[#173e72] text-white bg-[linear-gradient(53deg,transparent_calc(50%-12px),#8fb8d8aa_50%,transparent_calc(50%+9px)),linear-gradient(90deg,#2a7299,#3a8fc0_5%,#3a8dc8_45%,#2273b8_67%,#1a5e9f_76%,#17477f_80%,#103a70)] bg-[length:70px_40px,100%_100%] bg-[position:761px_0,0_0] bg-no-repeat">
    <div class="flex items-center">
      <svg class="ml-[7px]" width="40" height="38"><defs><radialGradient id="orb" cx=".5" cy=".95" r=".9"><stop offset="0" stop-color="#5fe0ff"/><stop offset=".4" stop-color="#1b6fae"/><stop offset="1" stop-color="#1e466d"/></radialGradient></defs><circle cx="20" cy="19" r="17.500" fill="url(#orb)" stroke="#a5c7dc" stroke-width="1.200"/><path d="M4 14Q20-6 36 14 20 22 4 14z" fill="#fff" opacity=".3"/><path d="M13 9q4-2 7 0l-2 8q-4-2-7 0z" fill="#ee6b32"/><path d="M21 10q4 2 8 0l-2 8q-4 2-8 0z" fill="#92c648"/><path d="M10 18q4-2 7 0l-2 8q-4-2-7 0z" fill="#4da8e8"/><path d="M18.500 19q4 2 8 0l-2 9q-4 2-8 0z" fill="#fbd044"/></svg>
      <svg class="ml-[26px]" width="34" height="34"><path d="M8 19h22Q30 7 19 7 8 8 7 19q1 11 12 11 9 0 11-7h-8q-5 5-9-1v-3z" fill="#63caf5" stroke="#1c7dbb"/><path d="M13 19h17v-3q-10 1-17 0z" fill="#63caf5"/><path d="M13 15q1-4 6-4t5 4z" fill="#2680ba"/><path d="M2 31Q-2 20 13 9 26 0 30 4q1 3-1 6 0-4-5-3-8 2-16 12-6 8-3 11z" fill="#f6d648" stroke="#c39c1e" stroke-width=".6"/></svg>
      <svg class="ml-[28px]" width="32" height="30"><path d="M5 4h21v22H5z" fill="#b5d3e8" stroke="#e3eef6"/><path d="M27.500 4v21m2-20v19" stroke="#d7e8f3"/><circle cx="13.500" cy="15" r="9.500" fill="#e87a29" stroke="#f6ba85"/><path d="m10.500 9 9 6-9 6z" fill="#fff"/></svg>
      <svg class="ml-[28px]" width="36" height="34"><path d="M3 5h12l2 3h16v21H3z" fill="#f3dc8b" stroke="#cda94d"/><path d="M7 3h23v6H7z" fill="#f7f2dc" stroke="#b5a66f" stroke-width=".6"/><path d="M7 5h4" stroke="#2a9a4b" stroke-width="3"/><path d="M16 6h4" stroke="#3d7dc0" stroke-width="3"/><path d="M23 6h4" stroke="#d33b2b" stroke-width="2"/><path d="M3 10h31v19H3z" fill="#f8e7a3" stroke="#d6b75f"/><path d="M7 31v-9q0-3 3-3h17q3 0 3 3v9h-5v-6H12v6z" fill="#a5d6f1" stroke="#5b9dc5"/><path d="M14 25h9v4h-9z" fill="#e9bd47"/></svg>
      <svg class="ml-[28px]" width="30" height="30" viewBox="0 0 30 30"><circle cx="15" cy="15" r="14" fill="#fbd12f"/><path d="M15 15 2.900 8A14 14 0 0 1 27.100 8H15z" fill="#e23b2e"/><path d="M15 15 9 18.500 2.900 8A14 14 0 0 0 14 29l6.500-11z" fill="#32a350"/><path d="M15 8h12.100L25 7H13z" fill="#e23b2e"/><circle cx="15" cy="15" r="6.500" fill="#fff"/><circle cx="15" cy="15" r="5.200" fill="#3f7fe0"/></svg>
      <div class="ml-[18px] w-[60px] h-[38px] rounded-[3px] border border-[#17405f] bg-linear-to-br from-[#d4e7f4] via-[#8fbbdb] to-[#cfe4f1] shadow-[inset_0_0_0_1px_#eaf4fa] grid place-items-center"><svg width="28" height="27"><path d="M1.500 3.500 4 1.500h22.500V23L24 25.500H1.500z" fill="#fbf36b" stroke="#222" stroke-width="1.400"/><path d="M8.500 2.500H24v16H8.500z" fill="#5fdcd8" stroke="#333" stroke-width=".8"/><path d="M26.500 1.500V23L24 25.500V4z" fill="#b9a733" stroke="#222"/></svg></div>
    </div>
    <div class="flex items-center font-['Open_Sans',sans-serif] text-[11.500px] leading-[17px]">
      <span class="w-[32px] mb-[4px] tracking-[-0.1px]">EN</span>
      <svg width="8" height="5" class="mr-[12px]"><path d="M0 4.500 3.800 0l4 4.500z" fill="#fff"/></svg>
      <svg width="17" height="16" class="mr-[7px]"><path d="M2 1v14" stroke="#fff" stroke-width="1.500"/><path d="M3 2h6l1 1h5v7H9L8 9H3z" fill="#f1f4f6"/><circle cx="11.500" cy="10.500" r="4.500" fill="#d5372c"/><path d="m9.500 8.500 4 4m0-4-4 4" stroke="#fff" stroke-width="1.400"/></svg>
      <svg width="17" height="16" fill="none" stroke="#fff" class="mr-[7px]"><path d="M4.500 3.500h11v8h-11zM7 14.500h7M10 12v2" stroke-width="1.500"/><path d="M1.500 1v4h4V1M3.500 5v9" stroke-width="1.300"/></svg>
      <svg width="18" height="16" fill="none" stroke="#fff" class="mr-[13px]"><path d="M1 5.500h3L8 1.500v13l-4-4H1z" fill="#fff" stroke="none"/><path d="M10 5.500q2 2.500 0 5M12.500 3.500q3 4 0 9M14.500 2q4 6 0 12"/></svg>
      <div class="w-[54px] text-center whitespace-nowrap tracking-[-0.3px] mr-[10px]"><p class="tracking-[0.1px]">7:24 AM</p><p>12/9/2014</p></div>
      <div class="w-[14px] h-full border border-[#6f93b5] bg-linear-to-br from-[#7b9ab7] via-[#1c436f] to-[#1c436f]"></div>
    </div>
  </footer>
</div>
<template id="row"><li class="flex items-center h-[18px]"><span class="w-[9px] ml-[1px] mr-[1px] border-t border-dotted border-[#8d9099]"></span><svg width="15" height="15" class="mr-[3px]"><use/></svg><i class="hidden w-[5px] h-[7px] mr-[2px] mb-[5px] border border-[#222]"></i><span class="name tracking-[-0.1px]"></span></li></template>
<script>
  const rows = ['4', '3', '2', '1', '6', '□7', '□7', '□7', '□7', '-5', '13', '15', '-17', '-16', '-8', '-12', '-11', '-9'];
  const tree = document.getElementById('tree');
  const tpl = document.getElementById('row');
  tree.classList.add('flex', 'flex-col');
  for (const r of rows) {
    const li = tpl.content.cloneNode(true).firstElementChild;
    const off = r[0] === '-';
    li.querySelector('use').setAttribute('href', off ? '#off' : '#part');
    if (off) li.classList.add('text-[#b6b8ba]');
    if (r[0] === '□') li.querySelector('i').classList.remove('hidden');
    li.querySelector('.name').textContent = r.replace(/[-□]/, '') + '.PRT';
    tree.append(li);
  }
  const stem = document.createElement('li');
  stem.className = 'absolute left-0 top-0 h-[315px] border-l border-dotted border-[#8d9099]';
  tree.append(stem);
</script>
</body>
</html>
